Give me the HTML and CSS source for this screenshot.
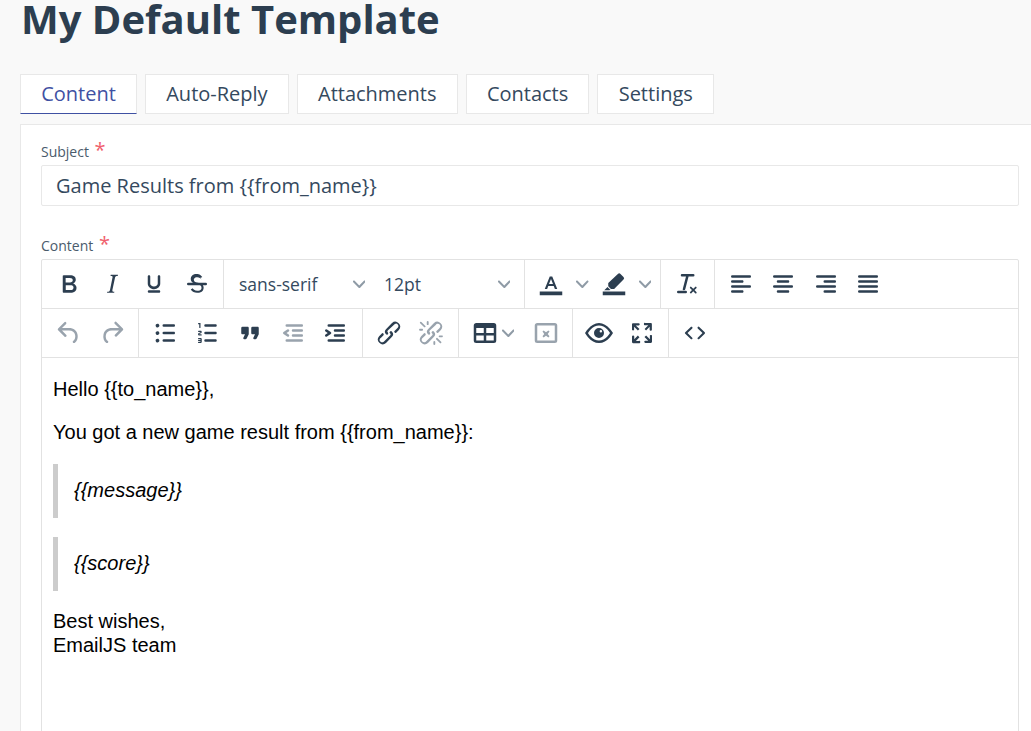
FILE: index.html
```html
<!DOCTYPE html>
<html lang="en">

<head>
    <meta charset="UTF-8">
    <meta name="viewport" content="width=device-width, initial-scale=1.0">
    <title>My Default Template</title>
    <link rel="stylesheet" href="styles.css">
</head>

<body>
    <h1 class="page-title">My Default Template</h1>

    <div class="tabs">
        <a class="tab active">Content</a>
        <a class="tab">Auto-Reply</a>
        <a class="tab">Attachments</a>
        <a class="tab">Contacts</a>
        <a class="tab">Settings</a>
    </div>

    <div class="panel">
        <label class="field-label">Subject <span class="required">*</span></label>
        <div class="text-input">Game Results from {{from_name}}</div>

        <label class="field-label second">Content <span class="required">*</span></label>
        <div class="editor">
            <div class="toolbar">
                <div class="group">
                    <button class="tool"><svg viewBox="0 0 24 24"><path d="M7.8 19c-.3 0-.5 0-.6-.2l-.2-.5V5.7c0-.2 0-.4.2-.5l.6-.2h5c1.5 0 2.7.3 3.5 1 .7.6 1.1 1.4 1.1 2.5a3 3 0 0 1-.6 1.9c-.4.6-1 1-1.6 1.2.4.1.9.3 1.3.6s.8.7 1 1.2c.4.4.5 1 .5 1.6 0 1.3-.4 2.3-1.3 3-.8.7-2.1 1-3.8 1H7.8zm5-8.3c.6 0 1.2-.1 1.6-.5.4-.3.6-.7.6-1.3 0-1.1-.8-1.7-2.3-1.7H9.3v3.5h3.4zm.5 6c.7 0 1.3-.1 1.7-.4.4-.4.6-.9.6-1.5s-.2-1-.7-1.4c-.4-.3-1-.4-2-.4H9.4v3.8h4z"/></svg></button>
                    <button class="tool"><svg viewBox="0 0 24 24"><path d="M16.7 4.7l-.1.9h-.3c-.6 0-1 0-1.4.3-.3.3-.4.6-.5 1.1l-2.1 9.8v.6c0 .5.4.8 1.4.8h.2l-.2.8H8l.2-.8h.2c1.1 0 1.8-.5 2-1.5l2-9.8.1-.5c0-.6-.4-.8-1.4-.8h-.3l.2-.9h5.8z"/></svg></button>
                    <button class="tool"><svg viewBox="0 0 24 24"><path d="M16 5c.6 0 1 .4 1 1v5.500a4 4 0 0 1-.4 1.800l-1 1.400a5.300 5.300 0 0 1-5.500 1 5 5 0 0 1-1.600-1c-.5-.4-.8-.9-1.100-1.400a4 4 0 0 1-.4-1.800V6c0-.6.4-1 1-1s1 .4 1 1v5.500c0 .3 0 .6.2 1l.6.7a3.300 3.300 0 0 0 2.200.8 3.400 3.400 0 0 0 2.200-.8c.3-.2.4-.5.6-.8l.2-.9V6c0-.6.4-1 1-1zM8 17h8c.6 0 1 .4 1 1s-.4 1-1 1H8a1 1 0 0 1 0-2z"/></svg></button>
                    <button class="tool"><svg viewBox="0 0 24 24"><path d="M15.600 8.500c-.5-.7-1-1.100-1.300-1.300-.6-.4-1.300-.6-2-.6-2.700 0-2.800 1.700-2.800 2.100 0 1.600 1.800 2 3.200 2.300 4.400.9 4.600 2.800 4.600 3.900 0 1.400-.7 4.100-5 4.100A6.200 6.200 0 0 1 7 16.400l1.500-1.100c.4.600 1.600 2 3.700 2 1.600 0 2.500-.4 3-1 .3-.4.4-.9.4-1.400 0-1.600-1.200-2.400-3.700-2.900-1.700-.3-4.900-1-4.900-4 0-1.800 1.100-4 4.600-4 1.300 0 2.200.3 3 .8.6.4 1.200 1 1.600 1.600l-1.100.6-.5-.5z"/><path d="M5 11h14a1 1 0 0 1 0 2H5a1 1 0 0 1 0-2z"/></svg></button>
                </div>
                <div class="group">
                    <button class="select">sans-serif<svg class="chevron" viewBox="0 0 10 10"><path d="M8.700 2.200c.3-.3.8-.3 1 0 .4.4.4.9 0 1.200L5.700 7.800c-.3.3-.9.3-1.200 0L.2 3.400a.8.800 0 0 1 0-1.200c.3-.3.8-.3 1.100 0L5 6l3.700-3.800z"/></svg></button>
                    <button class="select">12pt<svg class="chevron" viewBox="0 0 10 10"><path d="M8.700 2.200c.3-.3.8-.3 1 0 .4.4.4.9 0 1.200L5.700 7.800c-.3.3-.9.3-1.200 0L.2 3.400a.8.800 0 0 1 0-1.200c.3-.3.8-.3 1.100 0L5 6l3.700-3.800z"/></svg></button>
                </div>
                <div class="group">
                    <button class="tool"><svg viewBox="0 0 24 24"><path fill-rule="evenodd" d="M3 18h18v3H3zM11 6h2l4 10h-1.900l-.9-2.400H9.800L8.900 16H7zm-.6 6h3.200L12 7.900z"/></svg></button>
                    <button class="split"><svg class="chevron" viewBox="0 0 10 10"><path d="M8.700 2.200c.3-.3.8-.3 1 0 .4.4.4.9 0 1.200L5.700 7.800c-.3.3-.9.3-1.200 0L.2 3.400a.8.800 0 0 1 0-1.200c.3-.3.8-.3 1.100 0L5 6l3.700-3.800z"/></svg></button>
                    <button class="tool"><svg viewBox="0 0 24 24"><path d="M3 18h18v3H3zM15.100 3.900a1.500 1.500 0 0 1 2.100 0l2.400 2.400a1.500 1.500 0 0 1 0 2.100l-7.500 7.500H9.600L7.400 13.700v-2.500zM6.800 14.400l2.400 2.400-1.200.2H4.200z"/></svg></button>
                    <button class="split"><svg class="chevron" viewBox="0 0 10 10"><path d="M8.700 2.200c.3-.3.8-.3 1 0 .4.4.4.9 0 1.200L5.700 7.800c-.3.3-.9.3-1.200 0L.2 3.400a.8.800 0 0 1 0-1.200c.3-.3.8-.3 1.100 0L5 6l3.700-3.800z"/></svg></button>
                </div>
                <div class="group">
                    <button class="tool"><svg viewBox="0 0 24 24"><path d="M13.200 6a1 1 0 0 1 0 .2l-2.600 10a1 1 0 0 1-1 .8h-.2a.8.800 0 0 1-.8-1l2.600-10H8a1 1 0 1 1 0-2h9a1 1 0 0 1 0 2h-3.800z"/><path d="M5 17.400h6a1 1 0 0 1 0 2H5a1 1 0 0 1 0-2z"/><path transform="translate(-2 -2.700)" d="M18 19.500L16.500 18a.7.700 0 0 1 1-1l1.500 1.500 1.500-1.500a.7.700 0 0 1 1 1L20 19.500l1.500 1.500a.7.700 0 0 1-1 1L19 20.500 17.500 22a.7.700 0 0 1-1-1l1.500-1.500z"/></svg></button>
                </div>
                <div class="group last">
                    <button class="tool"><svg viewBox="0 0 24 24"><path d="M5 5h14c.6 0 1 .4 1 1s-.4 1-1 1H5a1 1 0 1 1 0-2zm0 4h8c.6 0 1 .4 1 1s-.4 1-1 1H5a1 1 0 1 1 0-2zm0 8h8c.6 0 1 .4 1 1s-.4 1-1 1H5a1 1 0 0 1 0-2zm0-4h14c.6 0 1 .4 1 1s-.4 1-1 1H5a1 1 0 0 1 0-2z"/></svg></button>
                    <button class="tool"><svg viewBox="0 0 24 24"><path d="M5 5h14c.6 0 1 .4 1 1s-.4 1-1 1H5a1 1 0 1 1 0-2zm3 4h8c.6 0 1 .4 1 1s-.4 1-1 1H8a1 1 0 1 1 0-2zm0 8h8c.6 0 1 .4 1 1s-.4 1-1 1H8a1 1 0 0 1 0-2zm-3-4h14c.6 0 1 .4 1 1s-.4 1-1 1H5a1 1 0 0 1 0-2z"/></svg></button>
                    <button class="tool"><svg viewBox="0 0 24 24"><path d="M5 5h14c.6 0 1 .4 1 1s-.4 1-1 1H5a1 1 0 1 1 0-2zm6 4h8c.6 0 1 .4 1 1s-.4 1-1 1h-8a1 1 0 0 1 0-2zm0 8h8c.6 0 1 .4 1 1s-.4 1-1 1h-8a1 1 0 0 1 0-2zm-6-4h14c.6 0 1 .4 1 1s-.4 1-1 1H5a1 1 0 0 1 0-2z"/></svg></button>
                    <button class="tool"><svg viewBox="0 0 24 24"><path d="M5 5h14c.6 0 1 .4 1 1s-.4 1-1 1H5a1 1 0 1 1 0-2zm0 4h14c.6 0 1 .4 1 1s-.4 1-1 1H5a1 1 0 1 1 0-2zm0 4h14c.6 0 1 .4 1 1s-.4 1-1 1H5a1 1 0 0 1 0-2zm0 4h14c.6 0 1 .4 1 1s-.4 1-1 1H5a1 1 0 0 1 0-2z"/></svg></button>
                </div>
            </div>

            <div class="toolbar">
                <div class="group">
                    <button class="tool disabled"><svg viewBox="0 0 24 24"><path d="M6.400 8H12c3.700 0 6.200 2 6.800 5.100.6 2.700-.4 5.600-2.300 6.800a1 1 0 0 1-1-1.800c1.100-.6 1.800-2.700 1.400-4.600-.5-2.100-2.100-3.500-4.900-3.500H6.400l3.300 3.300a1 1 0 1 1-1.400 1.400l-5-5a1 1 0 0 1 0-1.400l5-5a1 1 0 0 1 1.400 1.400L6.400 8z"/></svg></button>
                    <button class="tool disabled"><svg viewBox="0 0 24 24"><path d="M17.600 10H12c-2.800 0-4.400 1.400-4.900 3.500-.4 2 .3 4 1.400 4.600a1 1 0 1 1-1 1.800c-2-1.200-2.900-4.100-2.300-6.800.6-3 3-5.100 6.800-5.100h5.600l-3.300-3.300a1 1 0 1 1 1.400-1.400l5 5a1 1 0 0 1 0 1.400l-5 5a1 1 0 0 1-1.400-1.400l3.300-3.300z"/></svg></button>
                </div>
                <div class="group">
                    <button class="tool"><svg viewBox="0 0 24 24"><path d="M11 5h8c.6 0 1 .4 1 1s-.4 1-1 1h-8a1 1 0 0 1 0-2zm0 6h8c.6 0 1 .4 1 1s-.4 1-1 1h-8a1 1 0 0 1 0-2zm0 6h8c.6 0 1 .4 1 1s-.4 1-1 1h-8a1 1 0 0 1 0-2zM4.500 6c0-.4.1-.8.4-1 .3-.4.7-.5 1.100-.5.4 0 .8.1 1 .4.4.3.5.7.5 1.100 0 .4-.1.8-.4 1-.3.4-.7.5-1.100.5-.4 0-.8-.1-1-.4-.4-.3-.5-.7-.5-1.100zm0 6c0-.4.1-.8.4-1 .3-.4.7-.5 1.100-.5.4 0 .8.1 1 .4.4.3.5.7.5 1.100 0 .4-.1.8-.4 1-.3.4-.7.5-1.100.5-.4 0-.8-.1-1-.4-.4-.3-.5-.7-.5-1.100zm0 6c0-.4.1-.8.4-1 .3-.4.7-.5 1.100-.5.4 0 .8.1 1 .4.4.3.5.7.5 1.100 0 .4-.1.8-.4 1-.3.4-.7.5-1.100.5-.4 0-.8-.1-1-.4-.4-.3-.5-.7-.5-1.100z"/></svg></button>
                    <button class="tool"><svg viewBox="0 0 24 24"><path d="M10 17h8c.6 0 1 .4 1 1s-.4 1-1 1h-8a1 1 0 0 1 0-2zm0-6h8c.6 0 1 .4 1 1s-.4 1-1 1h-8a1 1 0 0 1 0-2zm0-6h8c.6 0 1 .4 1 1s-.4 1-1 1h-8a1 1 0 1 1 0-2zM6 4v3.500c0 .3-.2.5-.5.5a.5.500 0 0 1-.5-.5V5h-.5a.5.500 0 0 1 0-1H6zm-1 8.800l.2.2h1.300c.3 0 .5.2.5.5s-.2.5-.5.5H4.900a1 1 0 0 1-.9-1V13c0-.4.3-.8.6-1l1.200-.4.2-.3a.2.200 0 0 0-.2-.2H4.500a.5.500 0 0 1-.5-.5c0-.3.2-.5.5-.5h1.600c.5 0 .9.4.9 1v.1c0 .4-.3.8-.6 1l-1.200.4-.2.3zM7 17v2c0 .6-.4 1-1 1H4.500a.5.500 0 0 1 0-1h1.200c.2 0 .3-.1.3-.3 0-.2-.1-.3-.3-.3H4.400a.4.400 0 1 1 0-.8h1.300c.2 0 .3-.1.3-.3 0-.2-.1-.3-.3-.3H4.500a.5.500 0 1 1 0-1H6c.6 0 1 .4 1 1z"/></svg></button>
                    <button class="tool"><svg viewBox="0 0 24 24"><path d="M7.500 17h.9c.4 0 .7-.2.9-.6L11 13V8c0-.6-.4-1-1-1H6a1 1 0 0 0-1 1v4c0 .6.4 1 1 1h2l-1.300 2.700a1 1 0 0 0 .8 1.300zm8 0h.9c.4 0 .7-.2.9-.6L19 13V8c0-.6-.4-1-1-1h-4a1 1 0 0 0-1 1v4c0 .6.4 1 1 1h2l-1.300 2.700a1 1 0 0 0 .8 1.300z"/></svg></button>
                    <button class="tool disabled"><svg viewBox="0 0 24 24"><path d="M7 5h12c.6 0 1 .4 1 1s-.4 1-1 1H7a1 1 0 1 1 0-2zm5 4h7c.6 0 1 .4 1 1s-.4 1-1 1h-7a1 1 0 0 1 0-2zm0 4h7c.6 0 1 .4 1 1s-.4 1-1 1h-7a1 1 0 0 1 0-2zm-5 4h12a1 1 0 0 1 0 2H7a1 1 0 0 1 0-2zm1.600-3.800a1 1 0 0 1-1.200 1.600l-3-2a1 1 0 0 1 0-1.600l3-2a1 1 0 0 1 1.200 1.600L6.800 12l1.800 1.200z"/></svg></button>
                    <button class="tool"><svg viewBox="0 0 24 24"><path d="M7 5h12c.6 0 1 .4 1 1s-.4 1-1 1H7a1 1 0 1 1 0-2zm5 4h7c.6 0 1 .4 1 1s-.4 1-1 1h-7a1 1 0 0 1 0-2zm0 4h7c.6 0 1 .4 1 1s-.4 1-1 1h-7a1 1 0 0 1 0-2zm-5 4h12a1 1 0 0 1 0 2H7a1 1 0 0 1 0-2zm-2.600-3.800L6.200 12l-1.800-1.200a1 1 0 0 1 1.200-1.600l3 2a1 1 0 0 1 0 1.600l-3 2a1 1 0 1 1-1.200-1.600z"/></svg></button>
                </div>
                <div class="group">
                    <button class="tool"><svg viewBox="0 0 24 24"><path d="M6.200 12.300a1 1 0 0 1 1.400 1.400l-2 2a2 2 0 1 0 2.600 2.800l4.800-4.800a1 1 0 0 0 0-1.400 1 1 0 1 1 1.400-1.300 2.900 2.900 0 0 1 0 4L9.600 20a3.900 3.900 0 0 1-5.500-5.500l2-2zm11.600-.6a1 1 0 0 1-1.400-1.400l2-2a2 2 0 1 0-2.600-2.800L11 10a1 1 0 0 0 0 1.400A1 1 0 1 1 9.600 13a2.900 2.900 0 0 1 0-4L14.400 4a3.900 3.900 0 0 1 5.500 5.500l-2 2z"/></svg></button>
                    <button class="tool disabled"><svg viewBox="0 0 24 24"><path d="M6.200 12.300a1 1 0 0 1 1.400 1.400l-2.100 2a2 2 0 1 0 2.700 2.800l4.800-4.800a1 1 0 0 0 0-1.400 1 1 0 1 1 1.400-1.300 2.900 2.900 0 0 1 0 4L9.600 20a3.900 3.900 0 0 1-5.500-5.500l2-2zm11.600-.6a1 1 0 0 1-1.400-1.400l2.100-2a2 2 0 1 0-2.700-2.800L11 10a1 1 0 0 0 0 1.400A1 1 0 1 1 9.600 13a2.900 2.900 0 0 1 0-4L14.400 4a3.900 3.900 0 0 1 5.500 5.500l-2 2zM7.600 6.300a.8.800 0 0 1-1 1.100L3.300 4.200a.7.700 0 1 1 1-1l3.200 3.100zM5.100 8.600a.8.800 0 0 1 0 1.500H3a.8.800 0 0 1 0-1.500H5zm5-3.500a.8.800 0 0 1-1.500 0V3a.8.800 0 0 1 1.500 0V5zm6 11.800a.8.800 0 0 1 1-1l3.200 3.200a.8.800 0 0 1-1 1L16 17zm-2.200 2a.8.800 0 0 1 1.500 0V21a.8.800 0 0 1-1.500 0V19zm5-3.500a.7.700 0 1 1 0-1.500H21a.8.800 0 0 1 0 1.500H19z"/></svg></button>
                </div>
                <div class="group">
                    <button class="tool wide"><svg viewBox="0 0 24 24"><path d="M19 4a2 2 0 0 1 2 2v12a2 2 0 0 1-2 2H5a2 2 0 0 1-2-2V6c0-1.100.9-2 2-2h14zM5 14v4h6v-4H5zm14 0h-6v4h6v-4zm0-6h-6v4h6V8zM5 12h6V8H5v4z"/></svg><svg class="chevron" viewBox="0 0 10 10"><path d="M8.700 2.200c.3-.3.8-.3 1 0 .4.4.4.9 0 1.200L5.700 7.800c-.3.3-.9.3-1.200 0L.2 3.400a.8.800 0 0 1 0-1.200c.3-.3.8-.3 1.100 0L5 6l3.700-3.800z"/></svg></button>
                    <button class="tool disabled"><svg viewBox="0 0 24 24"><path d="M5 4h14a2 2 0 0 1 2 2v12a2 2 0 0 1-2 2H5a2 2 0 0 1-2-2V6c0-1.100.9-2 2-2zm0 2v12h14V6H5zm5.100 3.900L12 11.300l1.900-1.400 .9 .9-1.400 1.900 1.400 1.900-.9 .9-1.900-1.400-1.900 1.400-.9-.9 1.400-1.900-1.400-1.900z"/></svg></button>
                </div>
                <div class="group">
                    <button class="tool"><svg viewBox="0 0 24 24"><path fill-rule="evenodd" d="M3.500 12.500c.5.8 1.100 1.600 1.800 2.300 2 2 4.200 3.200 6.700 3.200s4.700-1.200 6.700-3.200a16.200 16.200 0 0 0 2.100-2.800 15.700 15.700 0 0 0-2.100-2.800c-2-2-4.200-3.200-6.700-3.200S7.300 7 5.300 9.200A16.200 16.200 0 0 0 3.200 12l.3.5zm-2.400-1c.7-1.100 1.300-2 2.100-2.800C5.700 5.900 8.700 4 12 4s6.300 1.900 8.800 4.700a18.200 18.200 0 0 1 2.400 3.300 18.200 18.200 0 0 1-2.400 3.300C18.300 18.100 15.300 20 12 20s-6.300-1.900-8.800-4.700A18.200 18.200 0 0 1 .8 12l.3-.5zM12 16a4 4 0 1 1 0-8 4 4 0 0 1 0 8zm1.500-6.500a1 1 0 1 0 0 2 1 1 0 0 0 0-2z"/></svg></button>
                    <button class="tool"><svg viewBox="0 0 24 24"><path d="M15.300 10l-1.200-1.300 2.900-3h-2.300a.9.900 0 1 1 0-1.700H19c.5 0 .9.4.9.9v4.400a.9.900 0 1 1-1.800 0V7l-2.900 3zm0 4l3 3v-2.300a.9.900 0 1 1 1.700 0V19c0 .5-.4.9-.9.9h-4.400a.9.900 0 1 1 0-1.800H17l-3-2.900 1.300-1.200zM10 15.400l-2.900 3h2.300a.9.900 0 1 1 0 1.700H5a.9.900 0 0 1-1-.9v-4.400a.9.900 0 1 1 1.800 0V17l2.900-3 1.200 1.300zM8.700 10L5.700 7v2.300a.9.900 0 0 1-1.700 0V5c0-.5.4-.9.9-.9h4.400a.9.900 0 0 1 0 1.800H7l3 2.900-1.300 1.200z"/></svg></button>
                </div>
                <div class="group last">
                    <button class="tool"><svg viewBox="0 0 24 24"><path d="M9.800 15.700c.3.3.3.8 0 1-.3.4-.9.4-1.200 0l-4.400-4.100a.8.800 0 0 1 0-1.200l4.400-4.200c.3-.3.9-.3 1.200 0 .3.3.3.8 0 1.100L6 12l3.800 3.700zm4.400 0c-.3.3-.3.8 0 1 .3.4.9.4 1.200 0l4.400-4.100c.3-.3.3-.9 0-1.200l-4.400-4.200a.8.800 0 0 0-1.200 0c-.3.3-.3.8 0 1.100L18 12l-3.800 3.700z"/></svg></button>
                </div>
            </div>

            <div class="editor-body">
                <p>Hello {{to_name}},</p>
                <p>You got a new game result from {{from_name}}:</p>
                <blockquote>{{message}}</blockquote>
                <blockquote>{{score}}</blockquote>
                <p>Best wishes,<br>EmailJS team</p>
            </div>
        </div>
    </div>
</body>

</html>
```

FILE: styles.css
```css
* {
    box-sizing: border-box;
}

html,
body {
    height: 731px;
    overflow: hidden;
}

body {
    margin: 0;
    padding-left: 20px;
    background: #f9f9f9;
    font-family: "Open Sans", Arial, sans-serif;
    color: #2c3e50;
}

.page-title {
    margin: 0 0 0 1px;
    height: 74px;
    font-size: 40px;
    line-height: 38px;
    font-weight: 700;
    white-space: nowrap;
    color: #2c3e50;
}

.tabs {
    display: flex;
    gap: 8px;
}

.tab {
    display: block;
    height: 40px;
    padding: 0 20.2px;
    background: #fff;
    border: 1px solid #e8e8e8;
    font-size: 20px;
    line-height: 38px;
    color: #34495e;
}

.tab.active {
    color: #3f51a3;
    border-bottom: 1px solid #3f51a3;
}

.panel {
    width: 1020px;
    height: 640px;
    margin-top: 10px;
    padding: 17px 20px 20px;
    background: #fff;
    border: 1px solid #e8e8e8;
}

.field-label {
    display: block;
    height: 23px;
    font-size: 14px;
    line-height: 16px;
    color: #4a5b6c;
}

.field-label.second {
    margin-top: 30px;
}

.required {
    margin-left: 2px;
    font-size: 20px;
    line-height: 16px;
    color: #f0616d;
}

.text-input {
    height: 41px;
    padding: 0 14px;
    border: 1px solid #e8e8e8;
    border-radius: 2px;
    font-size: 20px;
    line-height: 39px;
    color: #34495e;
}

.editor {
    height: 480px;
    border: 1px solid #e2e2e2;
    border-radius: 2px;
}

.toolbar {
    display: flex;
    height: 49px;
    padding-left: 1px;
    border-bottom: 1px solid #e2e2e2;
}

.group {
    display: flex;
    align-items: center;
    padding: 0 5px;
    border-right: 1px solid #e2e2e2;
}

.group.last {
    border-right: 0;
}

button {
    display: flex;
    align-items: center;
    justify-content: center;
    height: 42px;
    padding: 0;
    background: none;
    border: 0;
    font-family: inherit;
    color: #2c3e50;
    fill: #2c3e50;
}

.tool {
    width: 42.5px;
}

.tool svg {
    width: 30px;
    height: 30px;
}

.tool.disabled {
    fill: #99a3ad;
}

.tool.wide {
    width: 61px;
    justify-content: flex-start;
    padding-left: 6px;
}

.split {
    width: 20px;
}

.select {
    justify-content: space-between;
    width: 145px;
    padding: 0 9px 0 10px;
    font-size: 17.5px;
    color: #34495e;
}

.chevron {
    width: 12.5px;
    height: 12.5px;
    fill: #8f9ba6;
}

.tool .chevron {
    width: 12.5px;
    height: 12.5px;
    margin-left: 2px;
}

.editor-body {
    padding: 20px 11px;
    font-family: "Liberation Sans", Arial, sans-serif;
    font-size: 20px;
    line-height: 23.5px;
    color: #000;
}

.editor-body p {
    margin: 0 0 19.5px;
}

.editor-body blockquote {
    margin: 0 0 19.5px;
    padding: 15px 0 15px 16px;
    border-left: 5px solid #ccc;
    font-style: italic;
}
```
